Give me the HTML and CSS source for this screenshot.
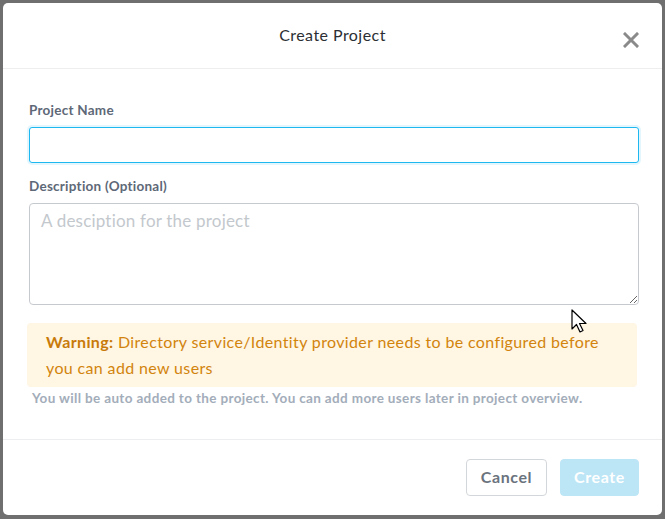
FILE: index.html
```html
<!DOCTYPE html>
<html>
<head>
<meta charset="utf-8">
<link rel="stylesheet" href="styles.css">
</head>
<body>
<div class="modal">
  <div class="modal-header">
    <span></span>
    <h1 class="title">Create Project</h1>
    <button class="close" aria-label="Close">
      <svg width="16" height="16" viewBox="0 0 16 16"><path d="M2 2L14 14M14 2L2 14" stroke="#8a8a8a" stroke-width="3" stroke-linecap="square"/></svg>
    </button>
  </div>
  <div class="modal-body">
    <label class="label">Project Name</label>
    <input class="input" type="text">
    <label class="label label-2">Description (Optional)</label>
    <textarea class="textarea" placeholder="A desciption for the project"></textarea>
    <div class="warning"><b>Warning:</b> Directory service/Identity provider needs to be configured before you can add new users</div>
    <p class="hint">You will be auto added to the project. You can add more users later in project overview.</p>
  </div>
  <div class="modal-footer">
    <button class="btn btn-cancel">Cancel</button>
    <button class="btn btn-create">Create</button>
  </div>
  <svg class="cursor" width="20" height="26" viewBox="0 0 20 26"><path d="M1 1L1 20L5.5 15.5L9 23L12 21.5L8.5 14.5L15 14.5Z" fill="#fff" stroke="#000" stroke-width="1.2" stroke-linejoin="round"/></svg>
</div>
</body>
</html>
```
FILE: styles.css
```css
* { box-sizing: border-box; }
html, body { margin: 0; padding: 0; }
body {
  background: #6f6f6f;
  width: 665px;
  height: 519px;
  padding: 3px 3px 4px 3px;
  font-family: Lato, "Open Sans", sans-serif;
  overflow: hidden;
}
.modal {
  position: relative;
  width: 659px;
  height: 512px;
  background: #fff;
  border-radius: 5px;
  display: flex;
  flex-direction: column;
}
.modal-header {
  height: 66px;
  border-bottom: 1px solid #eceeef;
  display: grid;
  grid-template-columns: 1fr auto 1fr;
  align-items: center;
  padding: 0 22px 0 22px;
}
.title {
  margin: 0;
  font-size: 16px;
  font-weight: 400;
  letter-spacing: 0.45px;
  color: #2b2f33;
  padding-bottom: 2px;
}
.close {
  justify-self: end;
  background: none;
  border: 0;
  padding: 0;
  margin-top: 8px;
  margin-right: 1px;
  width: 16px;
  height: 16px;
  display: flex;
}
.modal-body {
  padding: 33px 24px 0 26px;
  display: flex;
  flex-direction: column;
}
.label {
  font-size: 13.5px;
  font-weight: 700;
  letter-spacing: 0.25px;
  color: #5e6877;
  line-height: 16px;
}
.label-2 { margin-top: 15px; }
.input {
  margin-top: 9px;
  height: 36px;
  width: 610px;
  border: 1px solid #1eb8f0;
  border-radius: 3px;
  box-shadow: 0 0 0 2px #e3f6fd;
  outline: none;
  margin-left: 0;
}
.textarea {
  margin-top: 9px;
  height: 102px;
  width: 610px;
  border: 1px solid #c6cacf;
  border-radius: 4px;
  padding: 6px 11px;
  font-family: Lato, "Open Sans", sans-serif;
  font-size: 17px;
  letter-spacing: 0.2px;
  outline: none;
}
.textarea::placeholder { color: #c3c8cd; }
.warning {
  margin-top: 18px;
  margin-left: -2px;
  width: 610px;
  background: #fff6e4;
  border-radius: 4px;
  padding: 6px 18px 6px 19px;
  color: #d2840c;
  font-size: 16px;
  letter-spacing: 0.36px;
  line-height: 26px;
}
.warning b { font-weight: 700; color: #c87b0a; }
.hint {
  margin: 3px 0 0 3px;
  font-size: 13.5px;
  font-weight: 700;
  letter-spacing: 0.35px;
  color: #a3adba;
  line-height: 16px;
}
.modal-footer {
  margin-top: auto;
  height: 76px;
  border-top: 1px solid #eceeef;
  display: flex;
  justify-content: flex-end;
  align-items: flex-start;
  gap: 13px;
  padding: 19px 23px 0 0;
}
.btn {
  height: 37px;
  border-radius: 4px;
  font-family: Lato, "Open Sans", sans-serif;
  font-size: 16px;
  font-weight: 700;
  letter-spacing: 0.6px;
  padding: 0 0 2px 0;
}
.btn-cancel {
  width: 81px;
  background: #fff;
  border: 1px solid #d3d7db;
  color: #6a737d;
}
.btn-create {
  width: 79px;
  background: #bce5f6;
  border: 1px solid #bce5f6;
  color: #fff;
}
.cursor {
  position: absolute;
  left: 568px;
  top: 306px;
}
```
